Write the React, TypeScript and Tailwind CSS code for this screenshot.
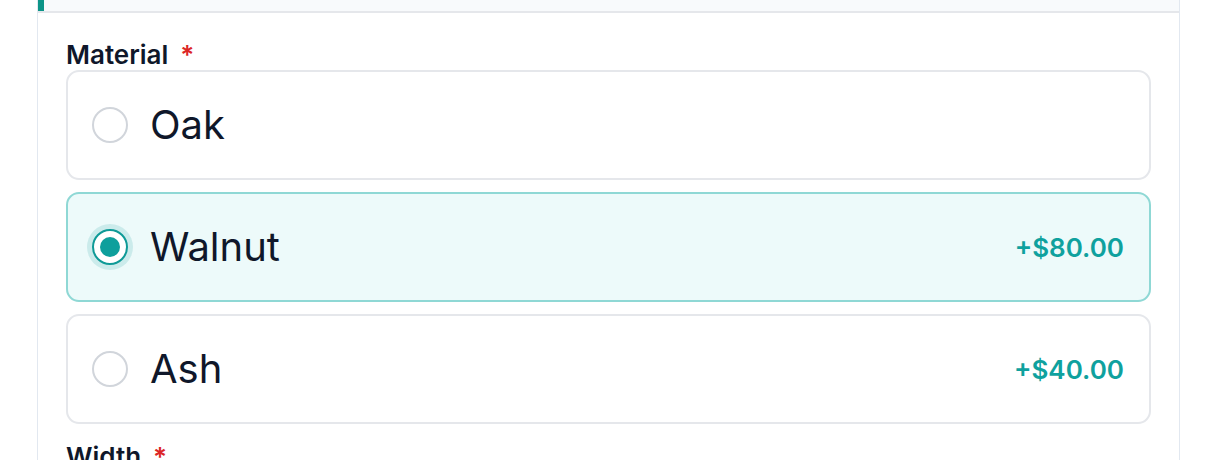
import { useState } from "react";

type TOption = {
  id: string;
  label: string;
  price?: string;
};

const options: TOption[] = [
  { id: "oak", label: "Oak" },
  { id: "walnut", label: "Walnut", price: "+$80.00" },
  { id: "ash", label: "Ash", price: "+$40.00" },
];

const Radio = ({ checked }: { checked: boolean }) =>
  checked ? (
    <span className="flex h-[36px] w-[36px] shrink-0 items-center justify-center rounded-full border-2 border-[#0e9a97] bg-white ring-[5px] ring-[#0e9a97]/15">
      <span className="h-[20px] w-[20px] rounded-full bg-[#0e9f9c]" />
    </span>
  ) : (
    <span className="h-[36px] w-[36px] shrink-0 rounded-full border-2 border-[#d1d5db] bg-white" />
  );

const App = () => {
  const [selected, setSelected] = useState("walnut");
  return (
    <div className="min-h-[460px] bg-white font-['Inter',sans-serif] text-[#0f172a]">
      <div className="ml-[37px] w-[1143px] border-x border-[#e2e8f0]">
        <div className="h-[13px] border-b-2 border-[#e5e7eb] bg-[#f8fafc]">
          <div className="h-full w-[6px] bg-[#0d9488]" />
        </div>
        <div className="px-[28px] pt-[27px]">
          <div className="flex items-center gap-[12px] text-[26px] font-semibold leading-[30px]">
            <span>Material</span>
            <span className="text-[#dc2626]">*</span>
          </div>
          <div className="flex flex-col gap-[12px]">
            {options.map((opt) => {
              const checked = selected === opt.id;
              return (
                <button
                  key={opt.id}
                  onClick={() => setSelected(opt.id)}
                  className={
                    checked
                      ? "flex h-[110px] items-center rounded-[13px] border-2 border-[#8fd8d5] bg-[#edfafa] pl-[24px] pr-[25px] text-left"
                      : "flex h-[110px] items-center rounded-[13px] border-2 border-[#e5e7eb] bg-white pl-[24px] pr-[25px] text-left"
                  }
                >
                  <Radio checked={checked} />
                  <span className="ml-[22px] flex-1 text-[40px] leading-none">
                    {opt.label}
                  </span>
                  {opt.price && (
                    <span className="text-[26px] font-semibold text-[#0fa19e]">
                      {opt.price}
                    </span>
                  )}
                </button>
              );
            })}
          </div>
          <div className="mt-[18px] flex items-center gap-[12px] text-[26px] font-semibold leading-[30px]">
            <span>Width</span>
            <span className="text-[#dc2626]">*</span>
          </div>
        </div>
      </div>
    </div>
  );
};

export default App;
